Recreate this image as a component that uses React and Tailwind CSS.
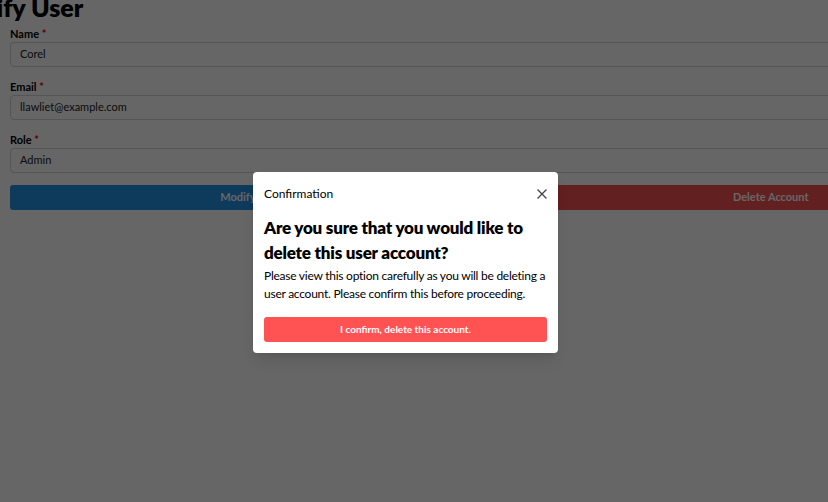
import React from "react";

function Field({ label, value }) {
  return (
    <div className="flex flex-col">
      <label className="text-[11px] font-bold text-black leading-[12px] mb-[2px]">
        {label} <span className="text-red-600">*</span>
      </label>
      <div className="h-[25px] rounded-[4px] border border-[#d4d4d4] bg-white flex items-center pl-[9px] text-[11px] text-[#222]">
        {value}
      </div>
    </div>
  );
}

export default function App() {
  return (
    <div
      className="relative w-[828px] h-[502px] overflow-hidden bg-white"
      style={{ fontFamily: "Lato, 'Noto Sans', sans-serif" }}
    >
      <div className="w-[1020px] pl-[10px]">
        <h1 className="text-[25px] font-extrabold text-black leading-[30px] -mt-[8px] -ml-[66px]">
          Modify User
        </h1>
        <div className="flex flex-col gap-[14px] mt-[6px]">
          <Field label="Name" value="Corel" />
          <Field label="Email" value="llawliet@example.com" />
          <Field label="Role" value="Admin" />
        </div>
        <div className="flex gap-[13px] mt-[12px]">
          <button className="flex-1 h-[25px] rounded-[3px] bg-[#2592e6] text-white text-[11px] font-bold">
            Modify Account
          </button>
          <button className="flex-1 h-[25px] rounded-[3px] bg-[#f55050] text-white text-[11px] font-bold">
            Delete Account
          </button>
        </div>
      </div>

      <div className="absolute inset-0 bg-black/60" />

      <div className="absolute left-[253px] top-[172px] w-[305px] h-[181px] bg-white rounded-[4px] shadow-lg px-[11px] pt-[13px]">
        <div className="flex items-center justify-between">
          <span className="text-[12px] text-black">Confirmation</span>
          <svg width="12" height="12" viewBox="0 0 12 12" className="mr-[-1px]">
            <path d="M1.5 1.5 L10.5 10.5 M10.5 1.5 L1.5 10.5" stroke="#444" strokeWidth="1.3" />
          </svg>
        </div>
        <h2 className="mt-[12px] text-[17px] tracking-[-0.2px] font-extrabold text-black leading-[25px]">
          Are you sure that you would like to delete this user account?
        </h2>
        <p className="mt-[2px] text-[12px] tracking-[-0.25px] text-black leading-[18px]">
          Please view this option carefully as you will be deleting a user account. Please confirm this before proceeding.
        </p>
        <button className="mt-[14px] w-full h-[25px] rounded-[3px] bg-[#ff5252] text-white text-[10px] font-bold">
          I confirm, delete this account.
        </button>
      </div>
    </div>
  );
}
